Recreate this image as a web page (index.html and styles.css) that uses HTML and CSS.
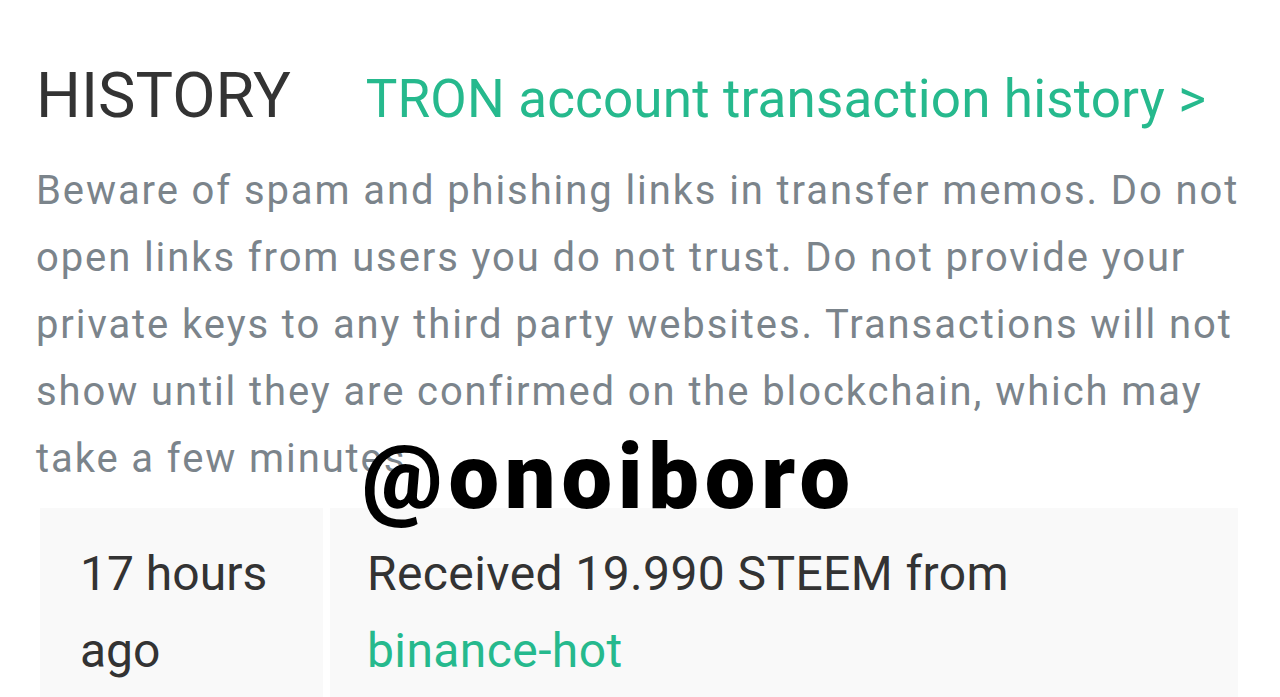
FILE: index.html
```html
<!DOCTYPE html>
<html lang="en">
<head>
<meta charset="utf-8">
<title>History</title>
<link rel="stylesheet" href="styles.css">
</head>
<body>
<div class="page">
  <div class="header">
    <h2 class="title">HISTORY</h2>
    <a class="tron-link" href="#">TRON account transaction history &gt;</a>
  </div>
  <p class="notice">Beware of spam and phishing links in transfer memos. Do not<br>open links from users you do not trust. Do not provide your<br>private keys to any third party websites. Transactions will not<br>show until they are confirmed on the blockchain, which may<br>take a few minutes.</p>
  <div class="table">
    <div class="row">
      <div class="cell cell-time">17 hours<br>ago</div>
      <div class="cell cell-desc">Received 19.990 STEEM from<br><a class="user" href="#">binance-hot</a></div>
    </div>
  </div>
  <div class="watermark">@onoiboro</div>
</div>
</body>
</html>
```

FILE: styles.css
```css
html, body {
  margin: 0;
  padding: 0;
  background: #ffffff;
}
body {
  width: 1280px;
  height: 697px;
  overflow: hidden;
  font-family: Roboto, "Liberation Sans", sans-serif;
}
.page {
  position: relative;
  padding: 58px 0 0 0;
}
.header {
  display: flex;
  align-items: baseline;
  gap: 75px;
  padding-left: 36px;
  height: 76px;
}
.title {
  margin: 0;
  font-size: 63px;
  font-weight: 400;
  line-height: 76px;
  color: #333333;
}
.tron-link {
  font-size: 53px;
  line-height: 76px;
  letter-spacing: 0.15px;
  color: #26b98d;
  text-decoration: none;
}
.notice {
  margin: 23px 0 0 36px;
  font-size: 40px;
  line-height: 67px;
  letter-spacing: 1.9px;
  color: #7b848b;
}
.table {
  margin: 16px 0 0 40px;
  width: 1198px;
}
.row {
  display: flex;
  gap: 7px;
}
.cell {
  background: #f9f9f9;
  font-size: 48px;
  line-height: 77px;
  color: #333333;
  padding: 27px 0 27px 0;
}
.cell-time {
  width: 243px;
  padding-left: 40px;
}
.cell-desc {
  flex: 1;
  padding-left: 37px;
  letter-spacing: 0.4px;
}
.user {
  color: #26b98d;
  text-decoration: none;
}
.watermark {
  position: absolute;
  left: 362px;
  top: 428px;
  font-size: 90px;
  font-weight: 900;
  line-height: 100px;
  letter-spacing: 5.8px;
  color: #000000;
}
```
